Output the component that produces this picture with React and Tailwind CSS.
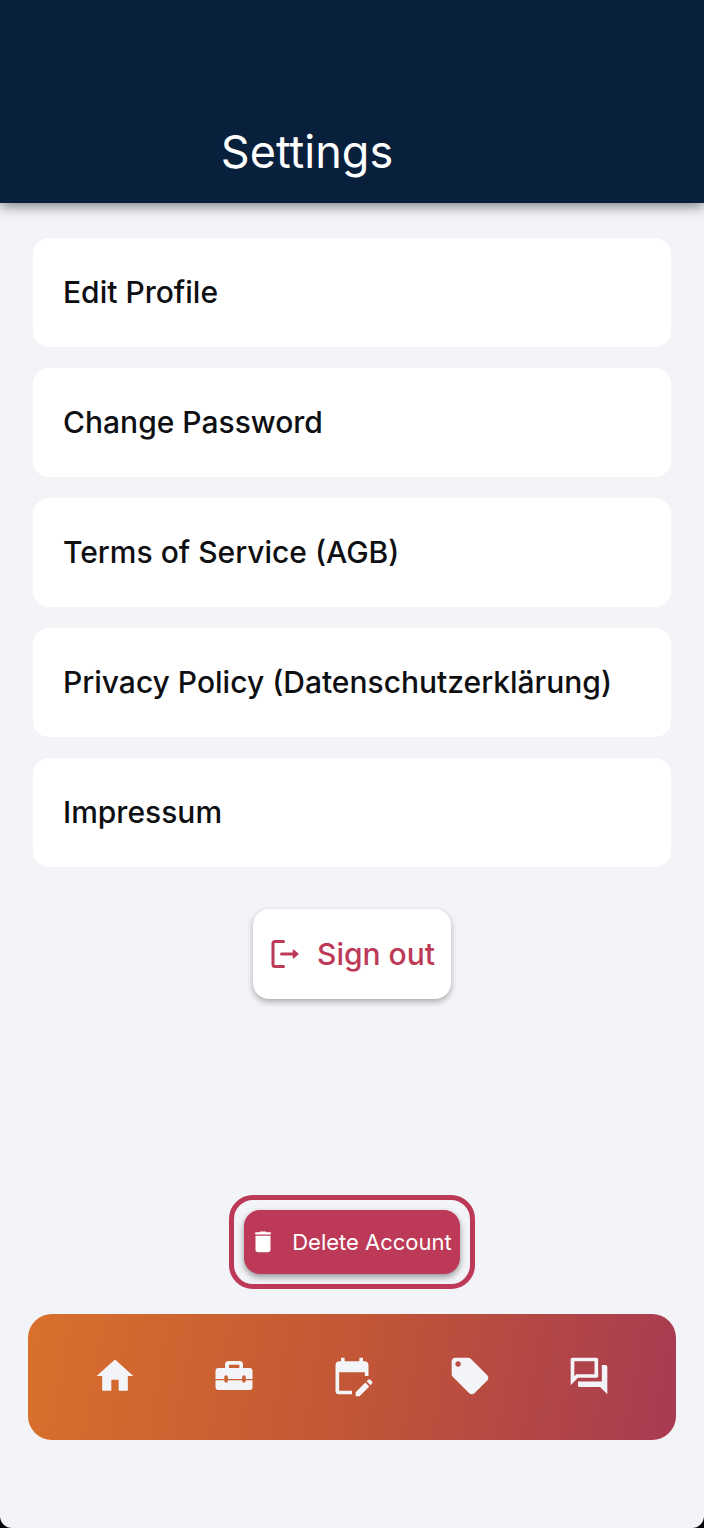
import { MdEditCalendar, MdHome, MdLocalOffer, MdOutlineForum } from 'react-icons/md'

const items = [
  'Edit Profile',
  'Change Password',
  'Terms of Service (AGB)',
  'Privacy Policy (Datenschutzerklärung)',
  'Impressum',
]

function SignOutIcon() {
  return (
    <svg className="w-8 h-8" viewBox="0 0 32 32" fill="none" stroke="currentColor" strokeWidth={3} strokeLinecap="round" strokeLinejoin="round">
      <path d="M14.5 3.500H6Q4 3.500 4 5.500V26.500Q4 28.500 6 28.500H14.500" />
      <path d="M12.500 16H24" />
      <path d="M24.500 12.300L29 16L24.500 19.700Z" fill="currentColor" strokeWidth={1.5} />
    </svg>
  )
}

function TrashIcon() {
  return (
    <svg className="w-6 h-6" viewBox="0 0 24 24" fill="currentColor">
      <path d="M4 2.300H7.500L8.300 1.500H13.700L14.500 2.300H18Q19 2.300 19 3.400T18 4.500H4Q3 4.500 3 3.400T4 2.300Z" />
      <path d="M3.500 5.700H18.500V19.500Q18.500 22.200 15.800 22.200H6.200Q3.500 22.200 3.500 19.500Z" />
    </svg>
  )
}

function ToolboxIcon() {
  return (
    <svg className="w-11 h-11" viewBox="0 0 44 44" fill="currentColor">
      <path
        fillRule="evenodd"
        d="M6.500 14H13V10.500Q13 7 16.500 7H27.500Q31 7 31 10.500V14H37.500Q40.500 14 40.500 17V25H33.700V23.200Q33.700 21.200 31.900 21.200T30.100 23.200V25H15.900V23.200Q15.900 21.200 14.100 21.200T12.300 23.200V25H3.500V17Q3.500 14 6.500 14ZM17 10.800V14H27.300V10.800Z"
      />
      <path d="M3.500 26.200H12.300Q12.300 28.700 14.100 28.700T15.900 26.200H30.100Q30.100 28.700 31.900 28.700T33.700 26.200H40.500V33Q40.500 36 37.500 36H6.500Q3.500 36 3.500 33Z" />
    </svg>
  )
}

const tabs = [
  { label: 'Home', icon: <MdHome className="w-11 h-11" /> },
  { label: 'Jobs', icon: <ToolboxIcon /> },
  { label: 'Calendar', icon: <MdEditCalendar className="w-11 h-11" /> },
  { label: 'Offers', icon: <MdLocalOffer className="w-11 h-11" /> },
  { label: 'Messages', icon: <MdOutlineForum className="w-11 h-11" /> },
]

export default function Settings() {
  return (
    <div className="min-h-screen bg-black flex font-['Inter',sans-serif]">
      <div className="flex-1 flex flex-col bg-[#f2f4f8] rounded-b-xl overflow-hidden">
        {/* Header */}
        <header className="bg-[#09203c] text-white pt-30 pb-5 pr-[90px] text-center shadow-[0_3px_12px_rgba(0,0,0,0.5)]">
          <h1 className="text-[45px] leading-[63px]">Settings</h1>
        </header>

        <main className="flex-1 flex flex-col items-center pt-[35px]">
          <ul className="w-full px-[33px] space-y-[21px]">
            {items.map((item) => (
              <li key={item}>
                <button
                  type="button"
                  className="w-full bg-white rounded-2xl px-[30px] py-8 text-left text-[30px] leading-[45px] font-medium text-[#0d0f12]"
                >
                  {item}
                </button>
              </li>
            ))}
          </ul>

          <button
            type="button"
            className="mt-[42px] h-[90px] px-4 flex items-center gap-4 bg-white rounded-2xl text-[30px] font-medium text-[#bc3a58] shadow-[0_3px_6px_rgba(0,0,0,0.3)]"
          >
            <SignOutIcon />
            Sign out
          </button>

          <div className="mt-auto p-[10px] border-[5px] border-[#bc3a58] rounded-3xl">
            <button
              type="button"
              className="h-16 px-2 flex items-center gap-4 bg-[#bc3a58] rounded-2xl text-[22px] text-white shadow-[0_3px_6px_rgba(0,0,0,0.4)]"
            >
              <TrashIcon />
              Delete Account
            </button>
          </div>
        </main>

        <nav className="mx-7 mt-[25px] mb-[88px] h-[126px] px-7 pb-[3px] flex items-center rounded-3xl text-[#f2f4f8] bg-linear-[100deg,#d9702c,#c25636_50%,#a83a52]">
          {tabs.map((tab) => (
            <button key={tab.label} type="button" aria-label={tab.label} className="flex-1 flex justify-center">
              {tab.icon}
            </button>
          ))}
        </nav>
      </div>
    </div>
  )
}
